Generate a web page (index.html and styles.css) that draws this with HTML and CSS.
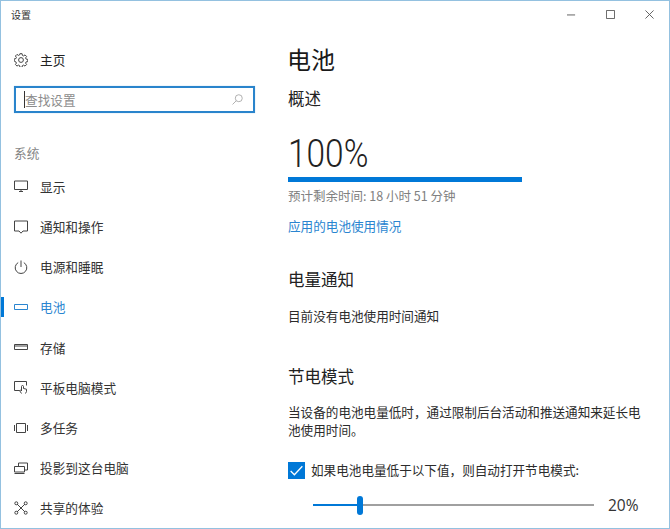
FILE: index.html
```html
<!DOCTYPE html>
<html lang="zh-CN">
<head>
<meta charset="utf-8">
<title>设置</title>
<link rel="stylesheet" href="styles.css">
</head>
<body>
<div class="window">
  <header class="titlebar">
    <span class="app-title">设置</span>
    <div class="controls">
      <svg class="ctl" viewBox="0 0 10 10"><path d="M0 5.5h9"/></svg>
      <svg class="ctl" viewBox="0 0 10 10"><path d="M.5.5h9v9h-9z"/></svg>
      <svg class="ctl" viewBox="0 0 10 10"><path d="M.5.5l9 9M9.5.5l-9 9"/></svg>
    </div>
  </header>
  <div class="body">
    <nav class="sidebar">
      <div class="home">
        <svg class="icon" viewBox="0 0 14 14"><circle cx="7" cy="7" r="2.4"/><path d="M5.9.7h2.2l.3 1.7 1.2.5 1.4-1 1.600 1.600-1 1.400.5 1.200 1.700.3v2.200l-1.700.3-.5 1.200 1 1.400-1.600 1.600-1.400-1-1.200.5-.3 1.700H5.900l-.3-1.700-1.200-.5-1.400 1-1.600-1.600 1-1.400-.5-1.200L.2 8.100V5.900l1.700-.3.5-1.200-1-1.400L3 1.400l1.400 1 1.200-.5z"/></svg>
        <span>主页</span>
      </div>
      <div class="search">
        <span class="caret"></span>
        <span class="placeholder">查找设置</span>
        <svg class="search-icon" viewBox="0 0 12 12"><circle cx="7.4" cy="4.6" r="3.8"/><path d="M4.7 7.3L.6 11.4"/></svg>
      </div>
      <div class="group">系统</div>
      <ul class="menu">
        <li class="item"><svg class="icon" viewBox="0 0 14 14"><path d="M.5 2h13v8.500H.5zM5 12.500h4M7 10.500v2"/></svg><span>显示</span></li>
        <li class="item"><svg class="icon" viewBox="0 0 14 14"><path d="M.5 1h13v10H9l-2 2.200L5 11H.5z"/></svg><span>通知和操作</span></li>
        <li class="item"><svg class="icon" viewBox="0 0 14 14"><path d="M7 .5v6.500M4.200 2.600a5.800 5.800 0 1 0 5.600 0"/></svg><span>电源和睡眠</span></li>
        <li class="item active"><svg class="icon" viewBox="0 0 14 14"><path d="M.5 4.500h13v5H.5z"/></svg><span>电池</span></li>
        <li class="item"><svg class="icon" viewBox="0 0 14 14"><path d="M.5 4.500h13v5H.5zM.5 6h13"/></svg><span>存储</span></li>
        <li class="item"><svg class="icon" viewBox="0 0 14 14"><path d="M5.500 10.500H.5V1.500h12v4M7.500 13.500l-2-3 1-.5 1 1V6.500a1 1 0 0 1 2 0v2l3 .7v2.300l-1 2"/></svg><span>平板电脑模式</span></li>
        <li class="item"><svg class="icon" viewBox="0 0 14 14"><path d="M2.500 2.500h9v9h-9zM.5 4v6M13.500 4v6"/></svg><span>多任务</span></li>
        <li class="item"><svg class="icon" viewBox="0 0 14 14"><path d="M4.500 5V2h9v7h-3M.5 5.500h10V11H.5zM.5 12.500h10"/></svg><span>投影到这台电脑</span></li>
        <li class="item"><svg class="icon" viewBox="0 0 14 14"><path d="M3 3l8 8M11 3l-8 8"/><circle cx="2.300" cy="2.300" r="1.500"/><circle cx="11.700" cy="2.300" r="1.500"/><circle cx="2.300" cy="11.700" r="1.500"/><circle cx="11.700" cy="11.700" r="1.500"/></svg><span>共享的体验</span></li>
      </ul>
    </nav>
    <main class="content">
      <h1 class="page-title">电池</h1>
      <h2 class="section first">概述</h2>
      <div class="percent">100%</div>
      <div class="bar"></div>
      <p class="remaining">预计剩余时间: 18 小时 51 分钟</p>
      <a class="link">应用的电池使用情况</a>
      <h2 class="section notify">电量通知</h2>
      <p class="text none">目前没有电池使用时间通知</p>
      <h2 class="section saver">节电模式</h2>
      <p class="text desc">当设备的电池电量低时，通过限制后台活动和推送通知来延长电池使用时间。</p>
      <div class="check-row">
        <span class="checkbox"><svg viewBox="0 0 16 16"><path d="M2.500 8.500l3.500 3.500 7.500-8"/></svg></span>
        <span class="text">如果电池电量低于以下值，则自动打开节电模式:</span>
      </div>
      <div class="slider-row">
        <div class="slider">
          <div class="track-on"></div>
          <div class="thumb"></div>
          <div class="track-off"></div>
        </div>
        <span class="value">20%</span>
      </div>
    </main>
  </div>
</div>
</body>
</html>
```
FILE: styles.css
```css
* { box-sizing: border-box; }
html, body { margin: 0; padding: 0; background: #fff; }
body { font-family: "Noto Sans CJK SC", "Noto Sans", sans-serif; color: #1f1f1f; }
.window { width: 670px; height: 529px; border: 1px solid #94c1e0; overflow: hidden; display: flex; flex-direction: column; }
.titlebar { height: 27px; flex: none; display: flex; justify-content: space-between; align-items: center; padding-left: 10px; }
.app-title { font-size: 10px; line-height: 27px; color: #333; }
.controls { display: flex; gap: 30px; padding-right: 15px; }
.ctl { width: 9px; height: 9px; fill: none; stroke: #555; stroke-width: 1; }
.body { display: flex; flex: 1; min-height: 0; }
.sidebar { width: 269px; flex: none; display: flex; flex-direction: column; }
.icon { width: 14px; height: 14px; flex: none; fill: none; stroke: #444; stroke-width: 1; }
.home { display: flex; align-items: center; gap: 12px; padding-left: 13px; height: 20px; margin-top: 22px; font-size: 12.700px; color: #222; }
.search { margin: 16px 0 0 13px; width: 241px; height: 27px; border: 2px solid #2a84cc; box-shadow: 0 0 1px #a8d0ee; display: flex; align-items: center; padding: 0 10px 0 8px; }
.caret { width: 1px; height: 17px; background: #333; flex: none; }
.placeholder { font-size: 12.700px; color: #8c8c8c; flex: 1; }
.search-icon { width: 11px; height: 11px; fill: none; stroke: #aaa; stroke-width: 1; }
.group { margin: 31px 0 0 13px; font-size: 12.700px; line-height: 18px; color: #858585; }
.menu { list-style: none; margin: 4.500px 0 0; padding: 0; }
.item { height: 40.200px; display: flex; align-items: center; gap: 12px; padding-left: 13px; font-size: 12.700px; color: #333; position: relative; }
.item.active { color: #2a85d0; }
.item.active .icon { stroke: #2a85d0; }
.item.active::before { content: ""; position: absolute; left: 0; top: 10px; width: 3px; height: 20px; background: #0078d7; }
.content { flex: 1; padding: 0 20px 0 18px; min-width: 0; }
.page-title { margin: 14px 0 0 -1px; font-size: 24px; line-height: 34px; font-weight: 400; color: #1a1a1a; }
.section { font-size: 16.500px; line-height: 24px; font-weight: 400; margin: 0; color: #222; }
.section.first { margin-top: 10px; }
.percent { font-family: Roboto, sans-serif; font-weight: 300; font-size: 38px; line-height: 45px; margin-top: 22px; color: #222; transform: scaleX(.88); transform-origin: left center; }
.bar { width: 234px; height: 5px; background: #0078d7; }
.remaining { margin: 5px 0 0; font-size: 12.500px; line-height: 18px; color: #808080; }
.link { display: block; margin-top: 12px; font-size: 12.600px; line-height: 18px; color: #2a85d0; }
.section.notify { margin-top: 32px; }
.text { font-size: 12.600px; line-height: 18px; color: #2b2b2b; }
.none { margin: 16px 0 0; }
.section.saver { margin-top: 39px; }
.desc { margin: 15px 0 0; line-height: 18px; }
.check-row { display: flex; align-items: center; gap: 6px; margin-top: 22px; }
.checkbox { width: 17px; height: 17px; background: #0078d7; display: flex; }
.checkbox svg { width: 17px; height: 17px; fill: none; stroke: #fff; stroke-width: 1.200; }
.slider-row { display: flex; align-items: center; margin-top: 15px; padding-left: 25px; }
.slider { display: flex; align-items: center; width: 281px; }
.track-on { width: 44px; height: 2px; background: #0078d7; }
.thumb { width: 6px; height: 19px; border-radius: 3px; background: #0078d7; flex: none; }
.track-off { flex: 1; height: 2px; background: #a0a0a0; }
.value { margin-left: 14px; font-family: "Open Sans", sans-serif; font-size: 15.500px; color: #333; }
```
